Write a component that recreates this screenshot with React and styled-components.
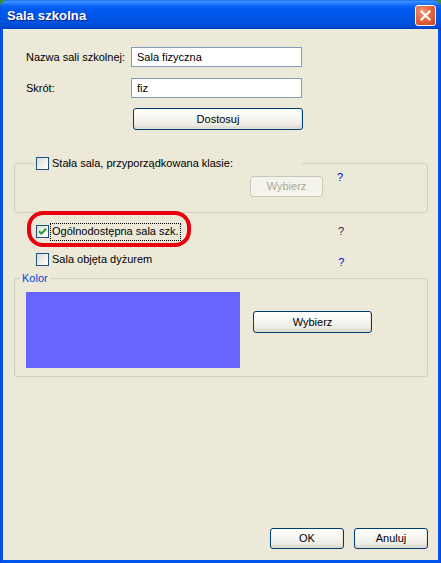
import React from "react";
import styled, { createGlobalStyle } from "styled-components";

const Global = createGlobalStyle`
  html, body { margin: 0; padding: 0; background: #3d8f2f; }
  body { font-family: "Liberation Sans", Arial, sans-serif; font-size: 11px; }
  * { box-sizing: border-box; }
`;

const Window = styled.div`
  width: 441px;
  height: 563px;
  display: flex;
  flex-direction: column;
  background: linear-gradient(to right, #0831d9 0px, #0055ea 1px, #0055ea 440px, #0831d9 441px);
  border-radius: 8px 8px 0 0;
  padding: 0 3px 3px 3px;
  overflow: hidden;
`;

const TitleBar = styled.div`
  height: 29px;
  margin: 0 -3px;
  padding: 0 5px 0 7px;
  display: flex;
  align-items: center;
  justify-content: space-between;
  background: linear-gradient(
    to bottom,
    #0a5ce8 0px,
    #3d95ff 1px,
    #2a82ff 3px,
    #0a64f5 6px,
    #0058ee 10px,
    #0055e5 18px,
    #0050dc 24px,
    #0047d2 27px,
    #003ec0 29px
  );
`;

const Title = styled.span`
  color: #fff;
  font-family: "Liberation Sans", Arial, sans-serif;
  font-weight: bold;
  font-size: 13px;
  padding-top: 2px;
  text-shadow: 1px 1px 0 #0a1e8a;
  letter-spacing: 0.1px;
`;

const CloseButton = styled.div`
  width: 21px;
  height: 21px;
  border: 1px solid #fff;
  border-radius: 3px;
  background: radial-gradient(circle at 35% 30%, #f09a7a 0%, #e5683f 45%, #c9441b 100%);
  display: flex;
  align-items: center;
  justify-content: center;
  margin-top: 1px;
`;

const Client = styled.div`
  flex: 1;
  background: #ece9d8;
  display: flex;
  flex-direction: column;
  padding: 18px 10px 11px 11px;
  color: #000;
`;

const FieldRow = styled.div`
  display: flex;
  align-items: center;
  padding-left: 12px;
  margin-top: ${(p) => p.$mt || 0}px;
`;

const FieldLabel = styled.span`
  width: 105px;
  line-height: 13px;
`;

const TextBox = styled.div`
  width: 171px;
  height: 20px;
  border: 1px solid #7f9db9;
  background: #fff;
  padding: 0 5px;
  display: flex;
  align-items: center;
  line-height: 13px;
`;

const Button = styled.div`
  width: ${(p) => p.$w}px;
  height: ${(p) => p.$h || 21}px;
  margin-left: ${(p) => p.$ml || 0}px;
  margin-top: ${(p) => p.$mt || 0}px;
  border: 1px solid ${(p) => (p.$disabled ? "#c9c7ba" : "#003c74")};
  border-radius: 3px;
  background: ${(p) =>
    p.$disabled
      ? "#f5f4ea"
      : "linear-gradient(to bottom, #ffffff 0%, #f7f7f3 40%, #ecebe4 80%, #d6d0c5 100%)"};
  color: ${(p) => (p.$disabled ? "#aca899" : "#000")};
  display: flex;
  align-items: center;
  justify-content: center;
  line-height: 13px;
  flex-shrink: 0;
  box-shadow: ${(p) => (p.$disabled ? "none" : "inset -1px -1px 0 #e3dfd2")};
`;

const Group = styled.fieldset`
  margin: ${(p) => p.$mt || 0}px 0 0 0;
  padding: 0;
  border: 1px solid #d0d0bf;
  border-radius: 3px;
  min-width: 0;
`;

const Legend = styled.legend`
  margin-left: ${(p) => p.$ml}px;
  padding: 0 ${(p) => p.$px || 0}px;
  width: ${(p) => (p.$w ? p.$w + "px" : "auto")};
  height: 13px;
  line-height: 13px;
  display: flex;
  align-items: center;
  color: ${(p) => p.$color || "#000"};
`;

const GroupBody = styled.div`
  display: flex;
  align-items: flex-start;
  padding: ${(p) => p.$pad};
`;

const Help = styled.span`
  color: ${(p) => p.$color || "#0000e0"};
  line-height: 13px;
  margin-left: ${(p) => p.$ml || 0}px;
  margin-top: ${(p) => p.$mt || 0}px;
`;

const CheckBox = styled.span`
  width: 13px;
  height: 13px;
  flex-shrink: 0;
  border: 1px solid #1c5180;
  background: linear-gradient(135deg, #dcdcd5 0%, #f2f2ee 60%, #ffffff 100%);
  display: inline-flex;
  align-items: center;
  justify-content: center;
  margin-right: 3px;
`;

const CheckRow = styled.div`
  display: flex;
  align-items: flex-start;
  padding-left: ${(p) => p.$pl || 0}px;
  margin-top: ${(p) => p.$mt || 0}px;
  line-height: 13px;
`;

const Highlight = styled.div`
  width: 164px;
  height: 36px;
  border: 4px solid #e8000c;
  border-radius: 16px;
  display: flex;
  align-items: flex-start;
  padding: 10px 0 0 5px;
`;

const Focus = styled.span`
  border: 1px dotted #000;
  padding: 1px 1px 2px 1px;
  margin: -2px 0 0 -2px;
  line-height: 13px;
`;

const Swatch = styled.div`
  width: 214px;
  height: 76px;
  background: #6666ff;
  margin-left: 11px;
  flex-shrink: 0;
`;

const Footer = styled.div`
  margin-top: auto;
  display: flex;
  justify-content: flex-end;
  gap: 10px;
`;

function Check({ checked }) {
  return (
    <CheckBox>
      {checked && (
        <svg width="9" height="9" viewBox="0 0 9 9">
          <path d="M1 4.2 L3.4 6.6 L8 1.8" fill="none" stroke="#21a121" strokeWidth="2" />
        </svg>
      )}
    </CheckBox>
  );
}

export default function App() {
  return (
    <>
      <Global />
      <Window>
        <TitleBar>
          <Title>Sala szkolna</Title>
          <CloseButton>
            <svg width="11" height="11" viewBox="0 0 11 11">
              <path d="M1.5 1.5 L9.5 9.5 M9.5 1.5 L1.5 9.5" stroke="#fff" strokeWidth="2" strokeLinecap="square" />
            </svg>
          </CloseButton>
        </TitleBar>
        <Client>
          <FieldRow>
            <FieldLabel>Nazwa sali szkolnej:</FieldLabel>
            <TextBox>Sala fizyczna</TextBox>
          </FieldRow>
          <FieldRow $mt={11}>
            <FieldLabel>Skrót:</FieldLabel>
            <TextBox>fiz</TextBox>
          </FieldRow>
          <FieldRow $mt={10}>
            <Button $w={170} $h={22} $ml={107}>Dostosuj</Button>
          </FieldRow>

          <Group $mt={27}>
            <Legend $ml={19} $px={2} $w={268}>
              <Check />
              Stała sala, przyporządkowana klasie:
            </Legend>
            <GroupBody $pad="6px 0 15px 0">
              <Button $w={73} $ml={235} $disabled>Wybierz</Button>
              <Help $ml={14} $mt={-5}>?</Help>
            </GroupBody>
          </Group>

          <CheckRow $pl={13} $mt={-2}>
            <Highlight>
              <Check checked />
              <Focus>Ogólnodostępna sala szk.</Focus>
            </Highlight>
            <Help $ml={147} $mt={14} $color="#1c2458">?</Help>
          </CheckRow>

          <CheckRow $pl={22} $mt={6}>
            <Check />
            <span>Sala objęta dyżurem</span>
            <Help $ml={186} $mt={3}>?</Help>
          </CheckRow>

          <Group $mt={3}>
            <Legend $ml={5} $px={2} $color="#0046d5">Kolor</Legend>
            <GroupBody $pad="7px 0 8px 0">
              <Swatch />
              <Button $w={119} $h={22} $ml={13} $mt={19}>Wybierz</Button>
            </GroupBody>
          </Group>

          <Footer>
            <Button $w={74}>OK</Button>
            <Button $w={74}>Anuluj</Button>
          </Footer>
        </Client>
      </Window>
    </>
  );
}
